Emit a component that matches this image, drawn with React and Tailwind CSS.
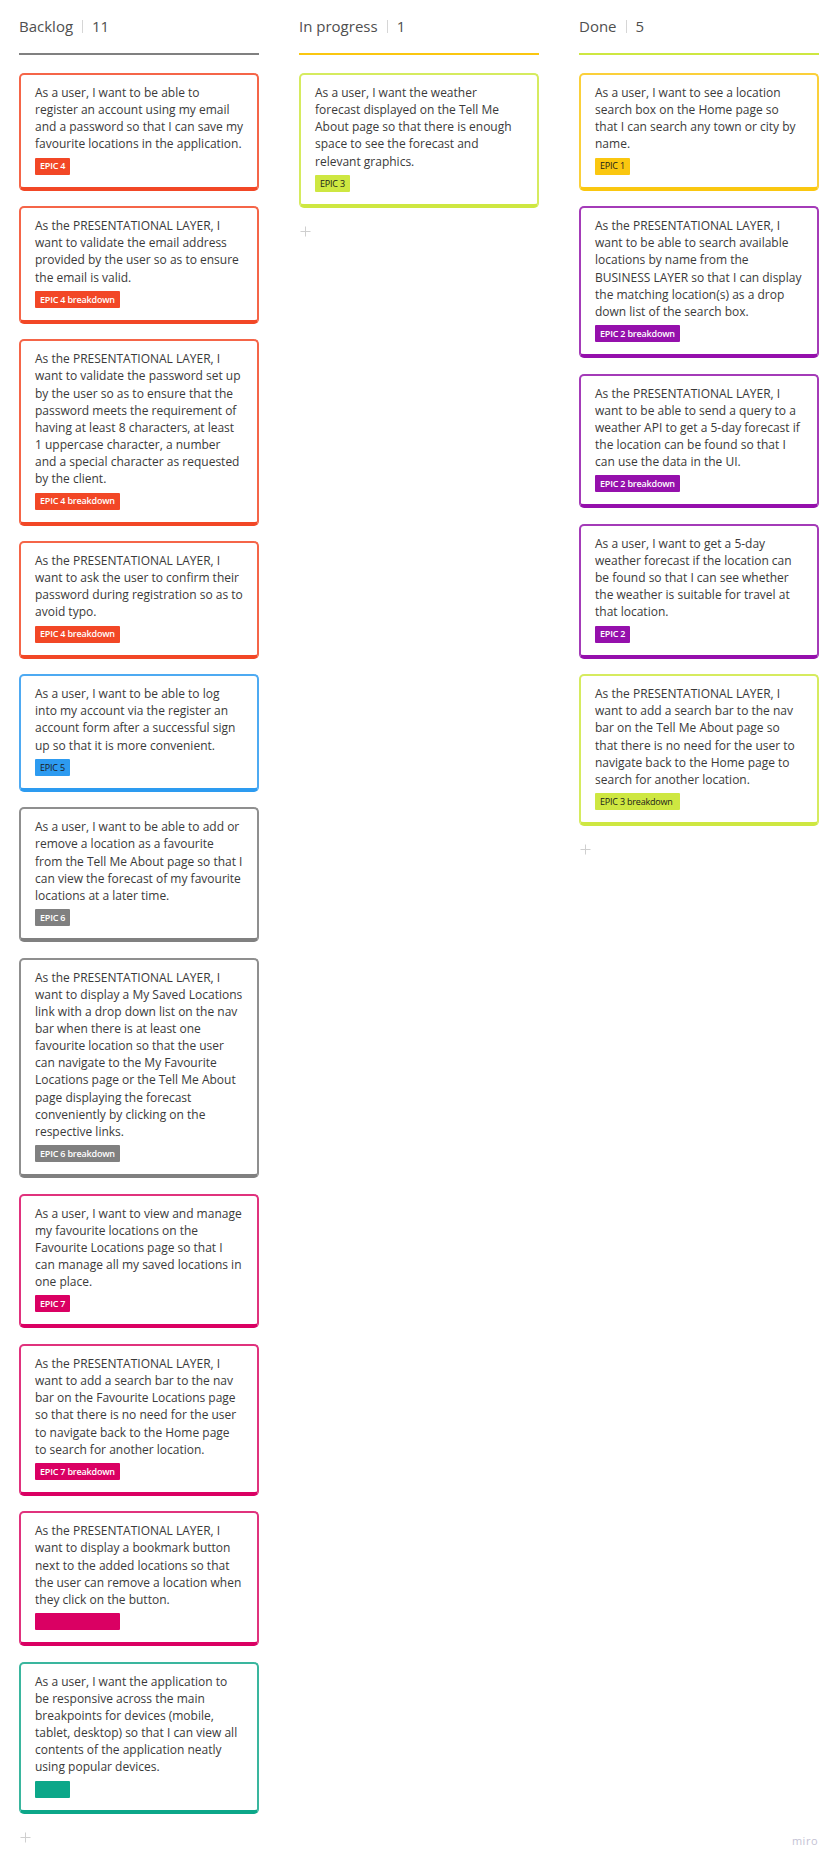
// Kanban board: three columns of user-story cards
const COLORS = {
  red: { card: "border-[#f56548] border-b-[#f24726]", tag: "bg-[#f24726] text-white font-semibold" },
  blue: { card: "border-[#4eaaf2] border-b-[#2d9bf0]", tag: "bg-[#2d9bf0] text-[#1a1a1a]" },
  gray: { card: "border-[#8f8f8f] border-b-[#808080]", tag: "bg-[#808080] text-white font-semibold" },
  pink: { card: "border-[#e0327d] border-b-[#da0063]", tag: "bg-[#da0063] text-white font-semibold" },
  teal: { card: "border-[#3ab69e] border-b-[#0ca789]", tag: "bg-[#0ca789] text-white font-semibold" },
  yellow: { card: "border-[#fbd03a] border-b-[#fac710]", tag: "bg-[#fac710] text-[#1a1a1a]" },
  lime: { card: "border-[#d6eb5f] border-b-[#cee741]", tag: "bg-[#cee741] text-[#1a1a1a]" },
  purple: { card: "border-[#a43bb8] border-b-[#9510ac]", tag: "bg-[#9510ac] text-white font-semibold" },
};

const columns = [
  {
    title: "Backlog",
    count: 11,
    line: "border-[#808080]",
    cards: [
      {
        color: "red",
        tag: "EPIC 4",
        lines: [
          "As a user, I want to be able to",
          "register an account using my email",
          "and a password so that I can save my",
          "favourite locations in the application.",
        ],
      },
      {
        color: "red",
        tag: "EPIC 4 breakdown",
        lines: [
          "As the PRESENTATIONAL LAYER, I",
          "want to validate the email address",
          "provided by the user so as to ensure",
          "the email is valid.",
        ],
      },
      {
        color: "red",
        tag: "EPIC 4 breakdown",
        lines: [
          "As the PRESENTATIONAL LAYER, I",
          "want to validate the password set up",
          "by the user so as to ensure that the",
          "password meets the requirement of",
          "having at least 8 characters, at least",
          "1 uppercase character, a number",
          "and a special character as requested",
          "by the client.",
        ],
      },
      {
        color: "red",
        tag: "EPIC 4 breakdown",
        lines: [
          "As the PRESENTATIONAL LAYER, I",
          "want to ask the user to confirm their",
          "password during registration so as to",
          "avoid typo.",
        ],
      },
      {
        color: "blue",
        tag: "EPIC 5",
        lines: [
          "As a user, I want to be able to log",
          "into my account via the register an",
          "account form after a successful sign",
          "up so that it is more convenient.",
        ],
      },
      {
        color: "gray",
        tag: "EPIC 6",
        lines: [
          "As a user, I want to be able to add or",
          "remove a location as a favourite",
          "from the Tell Me About page so that I",
          "can view the forecast of my favourite",
          "locations at a later time.",
        ],
      },
      {
        color: "gray",
        tag: "EPIC 6 breakdown",
        lines: [
          "As the PRESENTATIONAL LAYER, I",
          "want to display a My Saved Locations",
          "link with a drop down list on the nav",
          "bar when there is at least one",
          "favourite location so that the user",
          "can navigate to the My Favourite",
          "Locations page or the Tell Me About",
          "page displaying the forecast",
          "conveniently by clicking on the",
          "respective links.",
        ],
      },
      {
        color: "pink",
        tag: "EPIC 7",
        lines: [
          "As a user, I want to view and manage",
          "my favourite locations on the",
          "Favourite Locations page so that I",
          "can manage all my saved locations in",
          "one place.",
        ],
      },
      {
        color: "pink",
        tag: "EPIC 7 breakdown",
        lines: [
          "As the PRESENTATIONAL LAYER, I",
          "want to add a search bar to the nav",
          "bar on the Favourite Locations page",
          "so that there is no need for the user",
          "to navigate back to the Home page",
          "to search for another location.",
        ],
      },
      {
        color: "pink",
        tag: "",
        wide: true,
        lines: [
          "As the PRESENTATIONAL LAYER, I",
          "want to display a bookmark button",
          "next to the added locations so that",
          "the user can remove a location when",
          "they click on the button.",
        ],
      },
      {
        color: "teal",
        tag: "",
        lines: [
          "As a user, I want the application to",
          "be responsive across the main",
          "breakpoints for devices (mobile,",
          "tablet, desktop) so that I can view all",
          "contents of the application neatly",
          "using popular devices.",
        ],
      },
    ],
  },
  {
    title: "In progress",
    count: 1,
    line: "border-[#fac710]",
    cards: [
      {
        color: "lime",
        tag: "EPIC 3",
        lines: [
          "As a user, I want the weather",
          "forecast displayed on the Tell Me",
          "About page so that there is enough",
          "space to see the forecast and",
          "relevant graphics.",
        ],
      },
    ],
  },
  {
    title: "Done",
    count: 5,
    line: "border-[#cee741]",
    cards: [
      {
        color: "yellow",
        tag: "EPIC 1",
        lines: [
          "As a user, I want to see a location",
          "search box on the Home page so",
          "that I can search any town or city by",
          "name.",
        ],
      },
      {
        color: "purple",
        tag: "EPIC 2 breakdown",
        lines: [
          "As the PRESENTATIONAL LAYER, I",
          "want to be able to search available",
          "locations by name from the",
          "BUSINESS LAYER so that I can display",
          "the matching location(s) as a drop",
          "down list of the search box.",
        ],
      },
      {
        color: "purple",
        tag: "EPIC 2 breakdown",
        lines: [
          "As the PRESENTATIONAL LAYER, I",
          "want to be able to send a query to a",
          "weather API to get a 5-day forecast if",
          "the location can be found so that I",
          "can use the data in the UI.",
        ],
      },
      {
        color: "purple",
        tag: "EPIC 2",
        lines: [
          "As a user, I want to get a 5-day",
          "weather forecast if the location can",
          "be found so that I can see whether",
          "the weather is suitable for travel at",
          "that location.",
        ],
      },
      {
        color: "lime",
        tag: "EPIC 3 breakdown",
        lines: [
          "As the PRESENTATIONAL LAYER, I",
          "want to add a search bar to the nav",
          "bar on the Tell Me About page so",
          "that there is no need for the user to",
          "navigate back to the Home page to",
          "search for another location.",
        ],
      },
    ],
  },
];

function Card({ card }) {
  const c = COLORS[card.color];
  const wide = card.wide || card.tag.includes("breakdown");
  return (
    <div className={`rounded-[5px] border-2 border-b-4 ${c.card} bg-white pl-[14px] pr-[10px] pt-[9px] pb-[12px]`}>
      <div className="text-[12px] leading-[17.15px] text-[#3a3a3a]">
        {card.lines.map((l, i) => (
          <div key={i} className="whitespace-nowrap">
            {l}
          </div>
        ))}
      </div>
      <div
        className={`mt-[5px] flex h-[17px] items-center overflow-hidden whitespace-nowrap rounded-[1px] px-[5px] text-[9px] tracking-[-0.2px] ${c.tag} ${
          wide ? "w-[85px]" : "w-[35px]"
        }`}
      >
        {card.tag}
      </div>
    </div>
  );
}

function Plus() {
  return (
    <svg width="11" height="11" viewBox="0 0 11 11" className="ml-[1px]">
      <path d="M5.5 0.5v10M0.5 5.5h10" stroke="#cfcfcf" strokeWidth="1" />
    </svg>
  );
}

export default function App() {
  return (
    <div
      className="relative min-h-[1863px] bg-white"
      style={{ fontFamily: '"Open Sans", "Noto Sans", Arial, sans-serif' }}
    >
      <div className="flex gap-[40px] px-[19px]">
        {columns.map((col) => (
          <div key={col.title} className="w-[240px] shrink-0">
            {/* column header */}
            <div className={`flex h-[55px] items-center border-b-2 ${col.line} text-[15px] text-[#4f4f4f]`}>
              <span>{col.title}</span>
              <span className="mx-[9px] h-[13px] w-px bg-[#d6d6d6]" />
              <span>{col.count}</span>
            </div>

            <div className="mt-[18px] flex flex-col gap-[15.5px]">
              {col.cards.map((card, i) => (
                <Card key={i} card={card} />
              ))}
            </div>

            <div className="mt-[18px]">
              <Plus />
            </div>
          </div>
        ))}
      </div>

      <div className="absolute bottom-[14px] right-[20px] text-[11px] tracking-[0.5px] text-[#c4c2d4]">
        miro
      </div>
    </div>
  );
}
